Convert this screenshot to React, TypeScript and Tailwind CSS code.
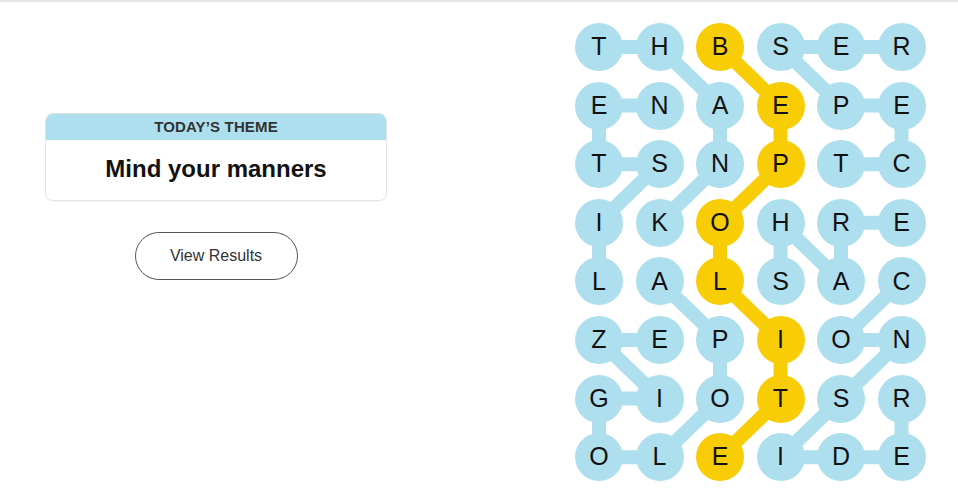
import React from "react";

const GRID = [
  "THBSER",
  "ENAEPE",
  "TSNPTC",
  "IKOHRE",
  "LALSAC",
  "ZEPION",
  "GIOTSR",
  "OLEIDE",
];

const SPAN: [number, number][] = [
  [0, 2], [1, 3], [2, 3], [3, 2], [4, 2], [5, 3], [6, 3], [7, 2],
];

const WORDS: [number, number][][] = [
  [[0, 0], [0, 1], [1, 2], [2, 2], [3, 1]],
  [[0, 5], [0, 4], [0, 3], [1, 4], [1, 5], [2, 5], [2, 4]],
  [[4, 0], [3, 0], [2, 1], [2, 0], [1, 0], [1, 1]],
  [[4, 1], [5, 2], [6, 2], [7, 1], [7, 0], [6, 0], [6, 1], [5, 0], [5, 1]],
  [[4, 3], [3, 3], [4, 4], [3, 4], [3, 5]],
  [[4, 5], [5, 4], [5, 5], [6, 4], [7, 3], [7, 4], [7, 5], [6, 5]],
];

const CW = 60.5;
const RH = 58.6;
const cx = (c: number) => 24 + c * CW;
const cy = (r: number) => 24 + r * RH;

const isSpan = (r: number, c: number) => SPAN.some(([a, b]) => a === r && b === c);

function Path({ pts, color }: { pts: [number, number][]; color: string }) {
  const segs = [];
  for (let i = 0; i < pts.length - 1; i++) {
    const [r1, c1] = pts[i];
    const [r2, c2] = pts[i + 1];
    segs.push(
      <line
        key={i}
        x1={cx(c1)}
        y1={cy(r1)}
        x2={cx(c2)}
        y2={cy(r2)}
        stroke={color}
        strokeWidth={14}
      />
    );
  }
  return <>{segs}</>;
}

export default function App() {
  return (
    <div
      className="w-full h-[501px] bg-white border-t-2 border-[#e6e6e6] flex overflow-hidden"
      style={{ fontFamily: '"Liberation Sans", Arial, sans-serif' }}
    >
      <div className="w-[432px] shrink-0 pl-[45px] pt-[111px] flex flex-col items-start">
        <div className="w-[342px] h-[88px] rounded-lg border border-[#e3e3e3] shadow-[0_1px_1px_rgba(0,0,0,0.04)] overflow-hidden flex flex-col">
          <div className="h-[26px] bg-[#aedfee] flex items-center justify-center text-[15px] font-bold text-[#333] tracking-[0.01em]">
            TODAY’S THEME
          </div>
          <div className="flex-1 flex items-center justify-center text-[24px] font-bold text-[#121212] pb-[2px]">
            Mind your manners
          </div>
        </div>
        <div className="w-[342px] flex justify-center mt-[31px]">
          <button className="w-[163px] h-[48px] rounded-full border border-[#555] bg-white text-[16px] text-[#333]">
            View Results
          </button>
        </div>
      </div>
      <div className="ml-[143px] mt-[21px] relative">
        <svg className="absolute inset-0" width={351} height={459}>
          {WORDS.map((w, i) => (
            <Path key={i} pts={w} color="#aedfee" />
          ))}
          <Path pts={SPAN} color="#f8cd05" />
        </svg>
        <div className="relative grid grid-cols-[repeat(6,48px)] auto-rows-[48px] gap-x-[12.5px] gap-y-[10.6px]">
          {GRID.flatMap((row, r) =>
            row.split("").map((ch, c) => (
              <div
                key={`${r}-${c}`}
                className={`w-12 h-12 rounded-full flex items-center justify-center text-[25px] text-[#121212] ${
                  isSpan(r, c) ? "bg-[#f8cd05]" : "bg-[#aedfee]"
                }`}
              >
                {ch}
              </div>
            ))
          )}
        </div>
      </div>
    </div>
  );
}
